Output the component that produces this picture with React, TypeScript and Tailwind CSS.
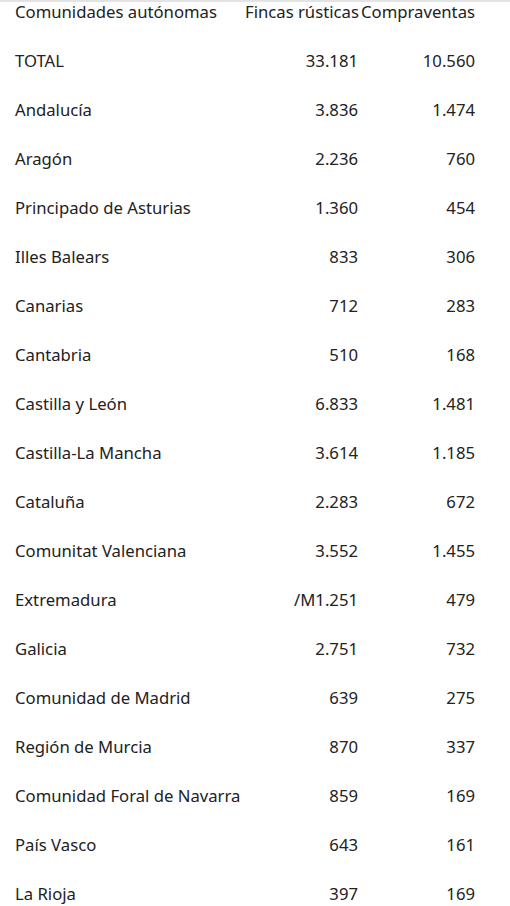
import React from "react";

const rows: [string, string, string][] = [
  ["TOTAL", "33.181", "10.560"],
  ["Andalucía", "3.836", "1.474"],
  ["Aragón", "2.236", "760"],
  ["Principado de Asturias", "1.360", "454"],
  ["Illes Balears", "833", "306"],
  ["Canarias", "712", "283"],
  ["Cantabria", "510", "168"],
  ["Castilla y León", "6.833", "1.481"],
  ["Castilla-La Mancha", "3.614", "1.185"],
  ["Cataluña", "2.283", "672"],
  ["Comunitat Valenciana", "3.552", "1.455"],
  ["Extremadura", "/M1.251", "479"],
  ["Galicia", "2.751", "732"],
  ["Comunidad de Madrid", "639", "275"],
  ["Región de Murcia", "870", "337"],
  ["Comunidad Foral de Navarra", "859", "169"],
  ["País Vasco", "643", "161"],
  ["La Rioja", "397", "169"],
];

export default function App() {
  return (
    <div
      className="w-[510px] h-[906px] overflow-hidden bg-white border-t-2 border-[#e3e3e3] text-[#222] text-[16.7px] leading-[20px]"
      style={{ fontFamily: '"Segoe UI", "Noto Sans", sans-serif' }}
    >
      <div className="flex h-[34px] pl-[15px]">
        <div className="w-[230px] whitespace-nowrap">Comunidades autónomas</div>
        <div className="w-[113px] text-right whitespace-nowrap">Fincas rústicas</div>
        <div className="w-[117px] text-right whitespace-nowrap">Compraventas</div>
      </div>
      {rows.map(([name, a, b]) => (
        <div key={name} className="flex h-[49px] items-center pl-[15px] pt-[1px]">
          <div className="w-[230px] whitespace-nowrap">{name}</div>
          <div className="w-[113px] text-right">{a}</div>
          <div className="w-[117px] text-right">{b}</div>
        </div>
      ))}
    </div>
  );
}
